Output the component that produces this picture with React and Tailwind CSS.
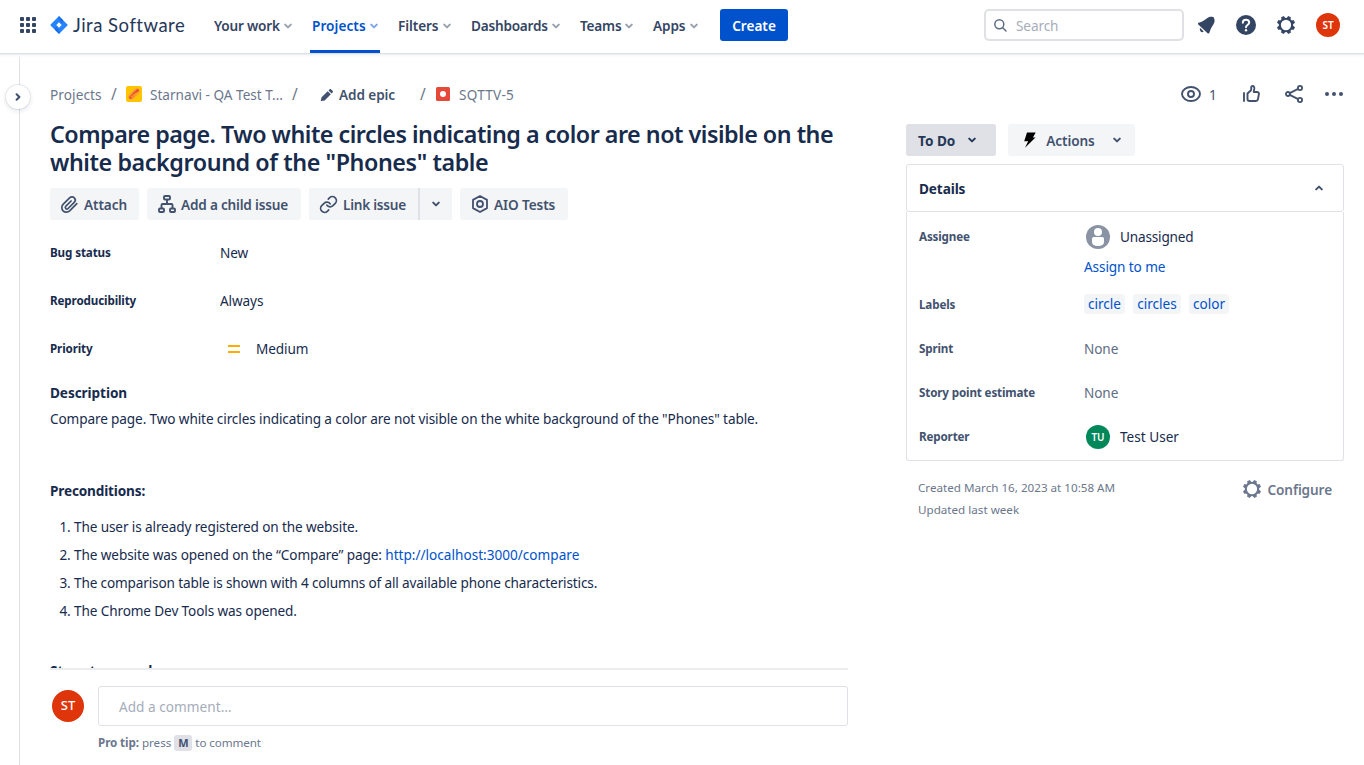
const NAV = [
  { label: "Your work", box: "w-[78px]", text: "tracking-[-0.2px]" },
  { label: "Projects", box: "w-[66px]", text: "tracking-[0.06px]", active: true },
  { label: "Filters", box: "w-[53px]", text: "tracking-[-0.1px]" },
  { label: "Dashboards", box: "w-[89px]", text: "tracking-[-0.22px]" },
  { label: "Teams", box: "w-[53px]", text: "tracking-[-0.2px]" },
  { label: "Apps", box: "w-[45px]", text: "tracking-[-0.1px]" },
];

const FIELDS = [
  { label: "Bug status", value: "New" },
  { label: "Reproducibility", value: "Always" },
  { label: "Priority", value: "Medium", icon: true },
];

const LABELS = [
  { name: "circle", box: "w-[41px]" },
  { name: "circles", box: "w-12" },
  { name: "color", box: "w-10" },
];

function Chevron({ className = "", up = false, w = 2 }) {
  return (
    <svg className={className} width="8" height="6" viewBox="0 0 8 6" fill="none" stroke="currentColor" strokeWidth={w} strokeLinecap="round" strokeLinejoin="round">
      <path d={up ? "M1.2 4.4 4 1.6l2.8 2.8" : "M1.2 1.6 4 4.4l2.8-2.8"} />
    </svg>
  );
}

function Gear({ className = "" }) {
  const teeth = [22.5, 67.5, 112.5, 157.5, 202.5, 247.5, 292.5, 337.5];
  return (
    <svg className={className} width="20" height="20" viewBox="0 0 20 20" fill="none" stroke="currentColor">
      <circle cx="10" cy="10" r="6.2" strokeWidth="2.1" />
      {teeth.map((a) => (
        <path key={a} d="M8.4 3.6 8.7 1.3h2.6l.3 2.3z" fill="currentColor" strokeWidth="0.7" strokeLinejoin="round" transform={`rotate(${a} 10 10)`} />
      ))}
    </svg>
  );
}

function Header() {
  return (
    <header className="relative z-10 flex h-[53px] shrink-0 items-center bg-white pl-5 pr-6 text-[#344563] shadow-[0_1px_0_0_#dce1e8,0_2px_1px_0_#eef0f3,0_4px_2px_0_#fafbfc]">
      <svg className="mb-[3px] shrink-0" width="16" height="16" viewBox="0 0 16 16" fill="currentColor">
        {[0, 6, 12].map((y) => [0, 6, 12].map((x) => <rect key={`${x}-${y}`} x={x} y={y} width="4" height="4" rx="0.9" />))}
      </svg>
      <svg className="mb-[3px] ml-3.5 shrink-0" width="18" height="18" viewBox="0 0 18 18">
        <defs>
          <linearGradient id="shadeTop" x1="0.9" y1="0.3" x2="0.3" y2="0.9">
            <stop offset="0.1" stopColor="#1062d8" />
            <stop offset="0.8" stopColor="#2684ff" />
          </linearGradient>
          <linearGradient id="shadeBottom" x1="0.1" y1="0.7" x2="0.7" y2="0.1">
            <stop offset="0.1" stopColor="#1062d8" />
            <stop offset="0.8" stopColor="#2684ff" />
          </linearGradient>
        </defs>
        <path d="M9 0 17.4 8.4q.6.6 0 1.2L9 18 .6 9.6q-.6-.6 0-1.2z" fill="#2684ff" />
        <path d="M9 .2q-2.6 2.8 0 6.1L11.4 8.8 13 4.2z" fill="url(#shadeTop)" />
        <path d="M9 17.8q2.6-2.8 0-6.1L6.600 9.200 5 13.800z" fill="url(#shadeBottom)" />
        <path d="M9 6.300 11.700 9 9 11.700 6.300 9z" fill="#fff" />
      </svg>
      <span className="mb-1 ml-[5px] w-[113px] shrink-0 whitespace-nowrap font-['Lato',sans-serif] text-[18.5px] leading-6 tracking-[0.5px] text-[#253858]">Jira Software</span>

      <nav className="ml-7 flex h-full shrink-0 gap-5">
        {NAV.map((n) => (
          <div key={n.label} className={`relative flex h-full items-center justify-between pb-[2px] ${n.box} ${n.active ? "text-[#0052cc]" : ""}`}>
            <span className={`whitespace-nowrap pt-0.5 text-[13.6px] font-semibold ${n.text}`}>{n.label}</span>
            <Chevron className="opacity-50" />
            {n.active && <span className="absolute -inset-x-0.5 bottom-0 h-[3px] bg-[#0052cc]" />}
          </div>
        ))}
      </nav>
      <button className="mb-[3px] ml-[22px] h-8 w-[68px] shrink-0 rounded-[3px] bg-[#0052cc] pt-0.5 text-[13.6px] font-semibold text-white">Create</button>

      <div className="mb-[3px] ml-auto flex h-8 w-[200px] shrink-0 items-center rounded-[5px] border-2 border-[#dfe1e6] pl-2">
        <svg width="13" height="13" viewBox="0 0 13 13" fill="none" stroke="#5e6c84" strokeWidth="1.5" strokeLinecap="round">
          <circle cx="5.3" cy="5.3" r="4.5" />
          <path d="m8.7 8.7 3.3 3.3" />
        </svg>
        <span className="ml-[9px] pt-0.5 text-[13.6px] tracking-[-0.1px] text-[#a5adba]">Search</span>
      </div>
      <svg className="mb-[3px] ml-3 shrink-0" width="22" height="22" viewBox="0 0 22 22" fill="currentColor">
        <path d="M2.3 10.600c-.6-.6-.3-1.5.4-1.8C6 7.600 8.500 6.400 10.700 4.400c2-1.800 4.600-2.200 6.400-1.300.8.400 1 1 1.100 1.700.9 1.800.3 4.400-1.300 6.400-1.700 2.300-2.600 4.600-3.500 7.600-.3.800-1.200 1-1.800.4z" />
        <path d="M4.200 14.100l3.500 3.500c-1 .9-2.200.7-3 0-.8-.8-1.200-2.400-.5-3.500z" />
      </svg>
      <svg className="mb-[3px] ml-[18px] shrink-0" width="20" height="20" viewBox="0 0 20 20">
        <circle cx="10" cy="10" r="10" fill="currentColor" />
        <path d="M6.800 7.800c0-1.900 1.400-3.100 3.200-3.100s3.200 1.100 3.200 2.800c0 1.300-.8 1.900-1.700 2.500-.9.600-1.500 1-1.500 2.200" fill="none" stroke="#fff" strokeWidth="2" strokeLinecap="round" />
        <circle cx="10" cy="15.200" r="1.200" fill="#fff" />
      </svg>
      <Gear className="mb-[3px] ml-5 shrink-0" />
      <span className="mb-[3px] ml-5 flex size-6 shrink-0 items-center justify-center rounded-full bg-[#de350b] text-[10px] font-semibold text-white">ST</span>
    </header>
  );
}

function Breadcrumbs() {
  return (
    <div className="flex h-7 items-center text-[13.6px] text-[#6b778c]">
      <span className="w-[52px] whitespace-nowrap tracking-[0.1px]">Projects</span>
      <span className="ml-[9px] w-[6px] text-[15.5px]">/</span>
      <svg className="mb-0.5 ml-[9px]" width="16" height="16" viewBox="0 0 16 16">
        <rect width="16" height="16" rx="2" fill="#ffc400" />
        <path d="M5.200 10.800 10.800 5.200" stroke="#ff8f4d" strokeWidth="5.500" strokeLinecap="round" />
        <path d="M4.300 11.700 11.700 4.300" stroke="#e5502b" strokeWidth="2.600" strokeLinecap="round" />
        <path d="m4.700 11.500.8-1.600 1.300.6.700-2 1.300.6.700-2 1.300.4.700-1.700" fill="none" stroke="#ffc400" strokeWidth="0.800" />
      </svg>
      <span className="ml-2 w-[133px] whitespace-nowrap">Starnavi - QA Test T...</span>
      <span className="ml-[9px] w-[6px] text-[15.5px]">/</span>
      <svg className="ml-[22px]" width="14" height="14" viewBox="0 0 14 14" fill="#42526e">
        <path d="M1.600 9.300 7.700 3.200l3.100 3.100-6.100 6.100-3.300.7c-.4.100-.7-.2-.6-.6z" />
        <path d="m8.500 2.400 1-1c.5-.5 1.200-.5 1.700 0l1.400 1.400c.5.500.5 1.200 0 1.700l-1 1z" />
      </svg>
      <span className="ml-[5px] w-[57px] whitespace-nowrap font-semibold tracking-[-0.1px] text-[#42526e]">Add epic</span>
      <span className="ml-[24px] w-[6px] text-[15.5px]">/</span>
      <svg className="mb-0.5 ml-[10px]" width="14" height="14" viewBox="0 0 14 14">
        <rect width="14" height="14" rx="1.500" fill="#e5493a" />
        <circle cx="7" cy="7" r="3" fill="#fff" />
      </svg>
      <span className="ml-[9px] whitespace-nowrap tracking-[0.25px]">SQTTV-5</span>
    </div>
  );
}

function Toolbar() {
  const box = "flex h-8 items-center bg-[#f4f5f7] text-[13.6px] font-semibold text-[#42526e]";
  return (
    <div className="mt-3 flex gap-2">
      <button className={`${box} w-[89px] rounded-[3px] pl-2.5`}>
        <svg width="19" height="19" viewBox="0 0 19 19" fill="none" stroke="currentColor" strokeWidth="1.700" strokeLinecap="round">
          <path d="m16.800 8.700-6.900 6.900c-1.900 1.900-5 2-6.800.2s-1.700-4.700.2-6.600l6.300-6.300c1.300-1.300 3.400-1.400 4.700-.1s1.200 3.300-.1 4.600l-6.100 6.100c-.7.700-1.700.7-2.300.1-.7-.7-.6-1.700.1-2.400l5.200-5.200" />
        </svg>
        <span className="ml-[5px] pt-0.5 tracking-[-0.1px]">Attach</span>
      </button>
      <button className={`${box} w-[154px] rounded-[3px] pl-[11px]`}>
        <svg width="18" height="18" viewBox="0 0 18 18" fill="none" stroke="currentColor" strokeWidth="1.900" strokeLinejoin="round">
          <rect x="6" y="1" width="6" height="3.500" rx="1" />
          <rect x="1" y="13.500" width="5" height="3.500" rx="1" />
          <rect x="12" y="13.500" width="5" height="3.500" rx="1" />
          <path d="M9 4.500V9M3.500 13.500V10q0-1 1-1h9q1 0 1 1v3.500" />
        </svg>
        <span className="ml-[5px] whitespace-nowrap pt-0.5 tracking-[-0.2px]">Add a child issue</span>
      </button>
      <div className="flex gap-0.5 rounded-[3px] bg-[#dfe1e6]">
        <button className={`${box} w-[109px] rounded-l-[3px] pl-2.5`}>
          <svg width="19" height="19" viewBox="0 0 24 24" fill="none" stroke="currentColor" strokeWidth="2.200" strokeLinecap="round" strokeLinejoin="round">
            <path d="M10 13a5 5 0 0 0 7.540.540l3-3a5 5 0 0 0-7.070-7.070l-1.720 1.710" />
            <path d="M14 11a5 5 0 0 0-7.540-.540l-3 3a5 5 0 0 0 7.070 7.070l1.710-1.710" />
          </svg>
          <span className="ml-[5px] whitespace-nowrap pt-0.5 tracking-[-0.25px]">Link issue</span>
        </button>
        <button className={`${box} w-8 justify-center rounded-r-[3px]`}><Chevron /></button>
      </div>
      <button className={`${box} w-[108px] rounded-[3px] pl-[11px]`}>
        <svg width="18" height="18" viewBox="0 0 18 18" fill="none" stroke="currentColor" strokeWidth="1.800" strokeLinejoin="round">
          <path d="M9 1 16 4.900v8.200L9 17l-7-3.900V4.900z" />
          <circle cx="9" cy="9" r="3" />
        </svg>
        <span className="ml-[5px] whitespace-nowrap pt-0.5 tracking-[-0.1px]">AIO Tests</span>
      </button>
    </div>
  );
}

function IssueBody() {
  return (
    <section className="h-[448px] overflow-hidden pt-[9px] text-[13.6px] text-[#172b4d]">
      {FIELDS.map((f) => (
        <div key={f.label} className="flex h-12 items-center">
          <span className="w-[170px] text-[11.65px] font-bold tracking-[-0.13px]">{f.label}</span>
          {f.icon && (
            <svg className="ml-2 mr-4" width="12" height="8" viewBox="0 0 12 8" fill="#ffab00">
              <rect width="12" height="2" rx="0.500" />
              <rect y="6" width="12" height="2" rx="0.500" />
            </svg>
          )}
          <span className="tracking-[-0.1px]">{f.value}</span>
        </div>
      ))}
      <h2 className="mt-2.5 leading-5 font-bold tracking-[-0.08px]">Description</h2>
      <p className="mt-1 whitespace-nowrap leading-6 tracking-[-0.118px]">
        Compare page. Two white circles indicating a color are not visible on the white background of the "Phones" table.
      </p>
      <h3 className="mt-[50px] leading-5 font-bold tracking-[-0.16px]">Preconditions:</h3>
      <ol className="mt-3 list-decimal whitespace-nowrap pl-6 leading-7 tracking-[-0.12px]">
        <li>The user is already registered on the website.</li>
        <li>
          <span className="tracking-[-0.105px]">The website was opened on the “Compare” page: </span>
          <a className="tracking-[0px] text-[#0052cc]">http://localhost:3000/compare</a>
        </li>
        <li className="tracking-[-0.148px]">The comparison table is shown with 4 columns of all available phone characteristics.</li>
        <li>The Chrome Dev Tools was opened.</li>
      </ol>
      <h3 className="mt-9 leading-5 font-bold tracking-[-0.1px]">Steps to reproduce:</h3>
    </section>
  );
}

function CommentBox() {
  return (
    <div className="mt-4 flex pl-0.5">
      <span className="mt-1 flex size-8 shrink-0 items-center justify-center rounded-full bg-[#de350b] text-[13px] font-medium text-white">ST</span>
      <div className="ml-3.5 flex-1">
        <div className="flex h-10 items-center rounded-[3px] border border-[#dfe1e6] pl-5 text-[13.6px] text-[#a5adba]">
          <span className="pt-0.5 tracking-[0.03px]">Add a comment…</span>
        </div>
        <div className="mt-2 flex h-[18px] items-center text-[11.65px] text-[#6b778c]">
          <b className="tracking-[-0.1px]">Pro tip:</b>
          <span className="ml-[3px]">press</span>
          <span className="ml-[3px] flex h-4 w-[18px] items-center justify-center rounded-[3px] bg-[#dfe1e6] text-[11px] font-bold text-[#42526e]">M</span>
          <span className="ml-[3px] tracking-[-0.1px]">to comment</span>
        </div>
      </div>
    </div>
  );
}

function IssueActions() {
  return (
    <div className="flex h-8 items-center text-[#42526e]">
      <svg className="ml-[275px]" width="20" height="16" viewBox="0 0 20 16" fill="none" stroke="currentColor" strokeWidth="1.900">
        <path d="M10 1c4.600 0 9 3.200 9 7s-4.400 7-9 7-9-3.200-9-7 4.400-7 9-7z" />
        <circle cx="10" cy="8" r="3" />
      </svg>
      <span className="ml-2 w-[10px] pt-0.5 text-[13.6px]">1</span>
      <svg className="ml-[23px]" width="18" height="18" viewBox="0 0 18 18" fill="none" stroke="currentColor" strokeWidth="1.900" strokeLinecap="round" strokeLinejoin="round">
        <path d="M2 8v8" />
        <path d="M5.500 8.500 9 5.200c.3-.8.300-1.800.2-2.600C9.200 1.600 9.800 1 10.600 1c1.200 0 1.900 1.200 1.700 2.700L11.700 7H15c1.300 0 2.100 1 1.900 2.200l-.9 5c-.2 1-1 1.800-2.100 1.800H7.500c-1.200 0-2-.8-2-2z" />
      </svg>
      <svg className="ml-[25px]" width="18" height="18" viewBox="0 0 18 18" fill="none" stroke="currentColor" strokeWidth="1.800">
        <circle cx="2.900" cy="9" r="2" />
        <circle cx="15" cy="3" r="2.100" />
        <circle cx="15" cy="15" r="2.100" />
        <path d="m4.800 8.100 8.300-4.200M4.800 9.900l8.300 4.200" />
      </svg>
      <svg className="ml-[22px]" width="18" height="4" viewBox="0 0 18 4" fill="currentColor">
        <circle cx="2" cy="2" r="2" />
        <circle cx="9" cy="2" r="2" />
        <circle cx="16" cy="2" r="2" />
      </svg>
    </div>
  );
}

function DetailRow({ label, children, className = "" }) {
  return (
    <div className={`flex items-center ${className}`}>
      <span className="w-[165px] text-[11.65px] font-bold tracking-[-0.15px] text-[#42526e]">{label}</span>
      {children}
    </div>
  );
}

function Details() {
  return (
    <div className="mt-2 text-[13.6px] text-[#172b4d]">
      <div className="flex h-12 items-center justify-between rounded-[3px] border border-[#dfe1e6] pb-px pl-3 pr-5">
        <h2 className="pt-[3px] font-bold tracking-[-0.1px]">Details</h2>
        <Chevron up className="text-[#42526e]" />
      </div>
      <div className="h-[249px] rounded-b-[3px] border border-t-0 border-[#dfe1e6] pl-3 pt-2.5">
        <DetailRow label="Assignee" className="h-[30px]">
          <svg className="ml-0.5" width="24" height="24" viewBox="0 0 24 24">
            <circle cx="12" cy="12" r="12" fill="#8993a4" />
            <circle cx="12" cy="7" r="4" fill="#fff" />
            <path d="M6 13.800q0-1.800 1.800-1.800h8.400q1.800 0 1.800 1.800V17q0 4-6 4t-6-4z" fill="#fff" />
          </svg>
          <span className="ml-2.5 tracking-[-0.18px]">Unassigned</span>
        </DetailRow>
        <div className="flex h-[30px] items-center pl-[165px] tracking-[-0.1px] text-[#0052cc]">Assign to me</div>
        <DetailRow label="Labels" className="h-11 pt-px">
          <div className="flex gap-2 text-[#0052cc]">
            {LABELS.map((l) => (
              <span key={l.name} className={`mb-px flex h-5 items-center justify-center rounded-[3px] bg-[#f4f5f7] ${l.box}`}>{l.name}</span>
            ))}
          </div>
        </DetailRow>
        <DetailRow label="Sprint" className="mt-px h-11"><span className="tracking-[-0.1px] text-[#5e6c84]">None</span></DetailRow>
        <DetailRow label="Story point estimate" className="h-11"><span className="tracking-[-0.1px] text-[#5e6c84]">None</span></DetailRow>
        <DetailRow label="Reporter" className="h-11">
          <span className="ml-0.5 flex size-6 items-center justify-center rounded-full bg-[#00875a] text-[10px] font-semibold text-white">TU</span>
          <span className="ml-2.5">Test User</span>
        </DetailRow>
      </div>
    </div>
  );
}

export default function App() {
  return (
    <div className="flex h-[765px] w-[1364px] flex-col overflow-hidden bg-white font-['Noto_Sans',sans-serif]">
      <Header />
      <div className="flex flex-1">
        <aside className="relative w-5 shrink-0 border-r border-[#dfe1e6]">
          <button className="absolute left-[6px] top-8 flex size-6 items-center justify-center rounded-full bg-white text-[#42526e] shadow-[0_0_0_1px_rgba(9,30,66,0.08),0_2px_4px_1px_rgba(9,30,66,0.08)]">
            <Chevron className="-rotate-90" />
          </button>
        </aside>
        <main className="ml-[30px] w-[798px] shrink-0 pt-7">
          <Breadcrumbs />
          <h1 className="mt-[11px] whitespace-nowrap text-[23.3px] leading-7 font-semibold text-[#172b4d]">
            <span className="block tracking-[-0.5px]">Compare page. Two white circles indicating a color are not visible on the</span>
            <span className="block tracking-[-0.42px]">white background of the "Phones" table</span>
          </h1>
          <Toolbar />
          <IssueBody />
          <div className="h-0.5 bg-[#ebecf0]" />
          <CommentBox />
        </main>
        <aside className="ml-[58px] w-[438px] shrink-0 pt-[25px]">
          <IssueActions />
          <div className="mt-3.5 flex gap-3 text-[13.6px]">
            <button className="flex h-8 w-[90px] items-center justify-between rounded-[3px] bg-[#dfe1e6] pl-3 pr-5 font-bold text-[#253858]">
              <span className="pt-0.5">To Do</span>
              <Chevron />
            </button>
            <button className="flex h-8 w-[127px] items-center rounded-[3px] bg-[#f4f5f7] font-semibold text-[#42526e]">
              <svg className="ml-4" width="12" height="16" viewBox="0 0 12 16" fill="#000">
                <path d="M3 .5h8.700L8.900 5.600h2.600L1 15.800 4.200 9.200H.2z" />
              </svg>
              <span className="ml-2.5 w-[49px] pt-0.5 tracking-[-0.1px]">Actions</span>
              <Chevron className="ml-[18px]" />
            </button>
          </div>
          <Details />
          <div className="mt-4 flex justify-between pl-3 pr-3 text-[11.65px] leading-[22px] text-[#6b778c]">
            <div>
              <p>Created March 16, 2023 at 10:58 AM</p>
              <p>Updated last week</p>
            </div>
            <div className="flex h-6 items-center text-[13.6px] font-semibold">
              <Gear />
              <span className="ml-1.5 pt-0.5 tracking-[-0.1px]">Configure</span>
            </div>
          </div>
        </aside>
      </div>
    </div>
  );
}
